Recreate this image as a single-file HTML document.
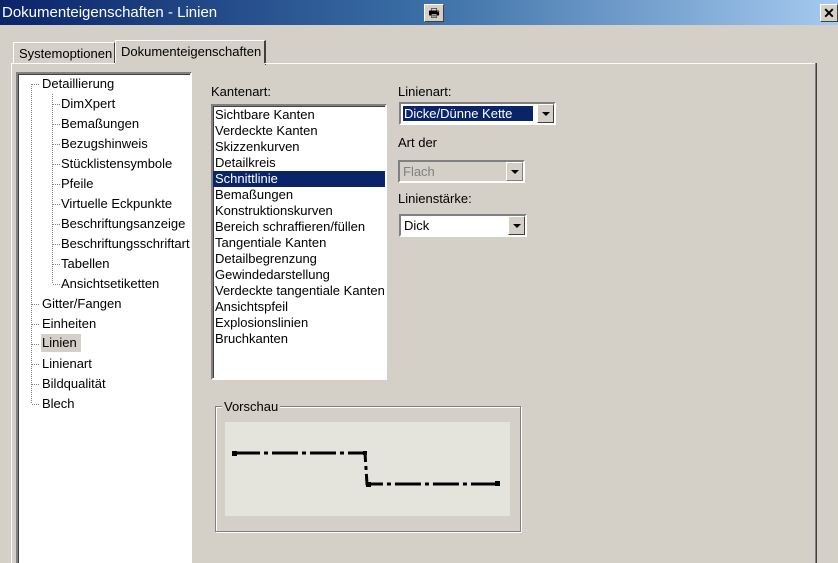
<!DOCTYPE html>
<html><head><style>
*{margin:0;padding:0;box-sizing:border-box}
html,body{width:838px;height:563px;overflow:hidden}
body{background:#d4d0c8;font-family:"Liberation Sans",sans-serif;font-size:13px;color:#000;position:relative}
.abs{position:absolute}
.title{left:0;top:0;width:838px;height:25px;background:linear-gradient(to right,#0a246a,#3a6ea5 50%,#a6caf0);color:#fff}
.title span{position:absolute;left:2px;top:4px;font-size:15px}
.btn{background:#d4d0c8;border:1px solid;border-color:#fff #404040 #404040 #fff}
.sunk{border:2px solid;border-color:#808080 #fff #fff #808080;box-shadow:inset 1px 1px 0 #404040}
.tree div{position:absolute;height:18px;line-height:18px;white-space:nowrap}
.list div{height:16px;line-height:16px;padding-left:2px;white-space:nowrap}
.combo{position:absolute;height:23px;background:#fff;border:2px solid;border-color:#808080 #fff #fff #808080}
.combo .t{position:absolute;left:2px;top:2px;height:15px;line-height:15px;padding:0 1px}
.combo .a{position:absolute;right:0;top:0;width:17px;height:19px;background:#d4d0c8;border:1px solid;border-color:#fff #404040 #404040 #fff}
.combo .a:after{content:"";position:absolute;left:4px;top:7px;border-left:4px solid transparent;border-right:4px solid transparent;border-top:4px solid #000}
</style></head><body>
<div class="abs title"><span>Dokumenteigenschaften - Linien</span>
<div class="abs btn" style="left:424px;top:4px;width:20px;height:18px;font-size:12px;color:#000;text-align:center;line-height:16px">🖶</div>
<div class="abs btn" style="left:820px;top:4px;width:18px;height:18px;color:#000;text-align:center;line-height:16px;font-size:14px;font-weight:bold">✕</div>
</div>
<div class="abs" style="left:13px;top:42px;width:102px;height:22px;border:1px solid;border-color:#fff #404040 transparent #fff;border-bottom:none"></div>
<div class="abs" style="left:19px;top:46px">Systemoptionen</div>
<div class="abs" style="left:115px;top:40px;width:151px;height:25px;border-top:1px solid #fff;border-left:1px solid #fff;border-right:2px solid #404040;background:#d4d0c8"></div>
<div class="abs" style="left:121px;top:44px">Dokumenteigenschaften</div>
<div class="abs" style="left:11px;top:63px;width:806px;height:1px;background:#fff"></div>
<div class="abs" style="left:115px;top:63px;width:150px;height:2px;background:#d4d0c8"></div>
<div class="abs" style="left:11px;top:63px;width:1px;height:500px;background:#fff"></div>
<div class="abs" style="left:815px;top:63px;width:2px;height:500px;background:#404040;border-left:1px solid #808080"></div>
<div class="abs sunk" style="left:16px;top:72px;width:176px;height:500px;background:#fff;overflow:hidden">
<svg class="abs" style="left:-2px;top:-2px" width="180" height="400">
<g stroke="#808080" stroke-dasharray="1,1" fill="none">
<line x1="15.5" y1="12" x2="15.5" y2="332"/>
<line x1="36.5" y1="22" x2="36.5" y2="212"/>
<line x1="16" y1="12.5" x2="24" y2="12.5"/>
<line x1="37" y1="32.5" x2="45" y2="32.5"/><line x1="37" y1="52.5" x2="45" y2="52.5"/><line x1="37" y1="72.5" x2="45" y2="72.5"/><line x1="37" y1="92.5" x2="45" y2="92.5"/><line x1="37" y1="112.5" x2="45" y2="112.5"/><line x1="37" y1="132.5" x2="45" y2="132.5"/><line x1="37" y1="152.5" x2="45" y2="152.5"/><line x1="37" y1="172.5" x2="45" y2="172.5"/><line x1="37" y1="192.5" x2="45" y2="192.5"/><line x1="37" y1="212.5" x2="45" y2="212.5"/>
<line x1="16" y1="232.5" x2="24" y2="232.5"/><line x1="16" y1="252.5" x2="24" y2="252.5"/><line x1="16" y1="272.5" x2="24" y2="272.5"/><line x1="16" y1="292.5" x2="24" y2="292.5"/><line x1="16" y1="312.5" x2="24" y2="312.5"/><line x1="16" y1="332.5" x2="24" y2="332.5"/>
</g></svg>
<div class="tree" style="position:absolute;left:-18px;top:-74px">
<div style="left:42px;top:75px">Detaillierung</div>
<div style="left:61px;top:95px">DimXpert</div>
<div style="left:61px;top:115px">Bemaßungen</div>
<div style="left:61px;top:135px">Bezugshinweis</div>
<div style="left:61px;top:155px">Stücklistensymbole</div>
<div style="left:61px;top:175px">Pfeile</div>
<div style="left:61px;top:195px">Virtuelle Eckpunkte</div>
<div style="left:61px;top:215px">Beschriftungsanzeige</div>
<div style="left:61px;top:235px">Beschriftungsschriftart</div>
<div style="left:61px;top:255px">Tabellen</div>
<div style="left:61px;top:275px">Ansichtsetiketten</div>
<div style="left:42px;top:295px">Gitter/Fangen</div>
<div style="left:42px;top:315px">Einheiten</div>
<div style="left:41px;top:334px;background:#d4d0c8;padding:0 1px;width:40px">Linien</div>
<div style="left:42px;top:355px">Linienart</div>
<div style="left:42px;top:375px">Bildqualität</div>
<div style="left:42px;top:395px">Blech</div>
</div>
</div>
<div class="abs" style="left:211px;top:84px">Kantenart:</div>
<div class="abs sunk list" style="left:211px;top:104px;width:176px;height:276px;background:#fff;padding-top:1px">
<div>Sichtbare Kanten</div><div>Verdeckte Kanten</div><div>Skizzenkurven</div><div>Detailkreis</div>
<div style="background:#0a246a;color:#fff">Schnittlinie</div>
<div>Bemaßungen</div><div>Konstruktionskurven</div><div>Bereich schraffieren/füllen</div><div>Tangentiale Kanten</div><div>Detailbegrenzung</div><div>Gewindedarstellung</div><div>Verdeckte tangentiale Kanten</div><div>Ansichtspfeil</div><div>Explosionslinien</div><div>Bruchkanten</div>
</div>
<div class="abs" style="left:398px;top:84px">Linienart:</div>
<div class="combo" style="left:399px;top:102px;width:157px"><div class="t" style="background:#0a246a;color:#fff;width:130px">Dicke/Dünne Kette</div><div class="a"></div></div>
<div class="abs" style="left:398px;top:135px">Art der</div>
<div class="combo" style="left:398px;top:160px;width:127px;background:#d4d0c8"><div class="t" style="color:#808080">Flach</div><div class="a" style="border-color:#fff #808080 #808080 #fff"></div></div>
<div class="abs" style="left:398px;top:191px">Linienstärke:</div>
<div class="combo" style="left:399px;top:214px;width:128px"><div class="t">Dick</div><div class="a"></div></div>
<div class="abs" style="left:215px;top:406px;width:306px;height:126px;border:1px solid #808080;box-shadow:1px 1px 0 #fff,inset 1px 1px 0 #fff"></div>
<div class="abs" style="left:222px;top:400px;background:#d4d0c8;padding:0 2px;line-height:14px">Vorschau</div>
<div class="abs" style="left:225px;top:422px;width:285px;height:94px;background:#e5e4dc"></div>
<svg class="abs" style="left:0;top:0" width="838" height="563">
<g stroke="#000" stroke-width="3" fill="none" stroke-dasharray="26,4,4,4">
<path d="M234 453 H365 L367 484 H498"/>
</g>
<g fill="#000"><rect x="232" y="451" width="5" height="5"/><rect x="363" y="451" width="4" height="4"/><rect x="366" y="482" width="5" height="5"/><rect x="495" y="481" width="5" height="5"/></g>
</svg>
</body></html>
